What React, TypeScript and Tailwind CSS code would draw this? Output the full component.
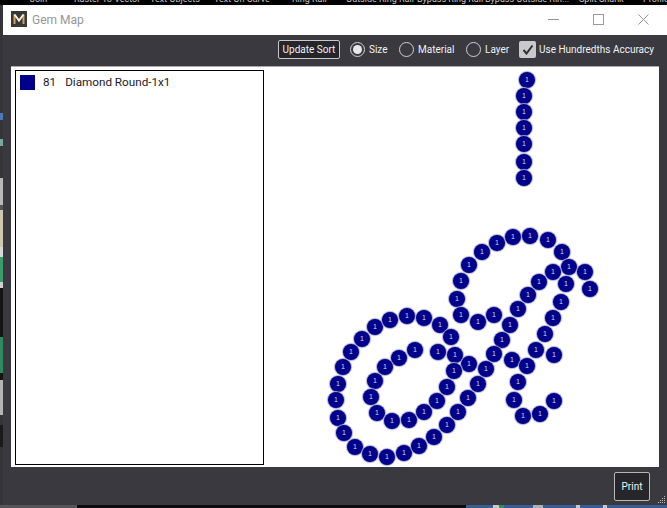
const FONT = "font-['Roboto','Liberation_Sans',sans-serif]"

// gem centres, read off the reference
const GEMS: [number, number][] = [
  [527, 79], [524, 95], [524, 111], [524, 127], [524, 143], [524, 161], [524, 177],
  [482, 251], [469, 264], [461, 280], [457, 298], [461, 314], [478, 321],
  [362, 338], [375, 326], [390, 319], [407, 315], [424, 317], [440, 324], [451, 336],
  [497, 242], [513, 236], [530, 235], [548, 239], [562, 251], [569, 266], [585, 271], [590, 288],
  [553, 271], [539, 281], [566, 283], [528, 294], [561, 301], [518, 308], [553, 317],
  [494, 314], [510, 324], [545, 333], [502, 339], [536, 349], [554, 354], [494, 353],
  [351, 351], [343, 366], [338, 383], [336, 399], [338, 417], [344, 432], [355, 446],
  [370, 453], [387, 456], [404, 452], [419, 445], [434, 436], [447, 424], [458, 411],
  [468, 397], [478, 383], [486, 368], [469, 363], [455, 354], [438, 351],
  [415, 349], [399, 357], [385, 366], [375, 380], [371, 396], [377, 412], [392, 420],
  [409, 419], [424, 411], [437, 400], [447, 386], [454, 370],
  [512, 359], [527, 365], [518, 381], [514, 399], [523, 415], [540, 413], [554, 400],
]

const PANEL_X = 11
const PANEL_Y = 66

function Radio({ label, checked, className }: { label: string; checked?: boolean; className: string }) {
  return (
    <div className={`flex items-center gap-[4px] ${className}`}>
      <span className="flex h-[15px] w-[15px] items-center justify-center rounded-full border border-[#d0d0d4]">
        {checked && <span className="h-[9px] w-[9px] rounded-full bg-[#e8e8ea]" />}
      </span>
      <span className="pt-[1px]">{label}</span>
    </div>
  )
}

export default function App() {
  return (
    <div className={`flex h-[508px] w-[667px] flex-col overflow-hidden bg-black ${FONT}`}>
      {/* app ribbon behind the dialog, only the bottom of the labels shows */}
      <div className="flex h-[5px] items-end overflow-hidden whitespace-nowrap pl-[30px] text-[9px] leading-[11px] text-[#c8c8c8]">
        <span className="w-[44px] shrink-0">Join</span>
        <span className="w-[76px] shrink-0">Raster To Vector</span>
        <span className="w-[64px] shrink-0">Text Objects</span>
        <span className="w-[78px] shrink-0">Text On Curve</span>
        <span className="w-[54px] shrink-0">Ring Rail</span>
        <span className="w-[71px] shrink-0">Outside Ring Rail</span>
        <span className="w-[68px] shrink-0">Bypass Ring Rail</span>
        <span className="w-[94px] shrink-0">Bypass Outside Rin...</span>
        <span className="w-[64px] shrink-0">Split Shank</span>
        <span className="shrink-0">Profile</span>
      </div>

      <div className="flex min-h-0 flex-1">
        {/* desktop sliver left of the dialog */}
        <div className="flex w-[3px] flex-col bg-[#34343a]">
          <div className="h-[108px]" />
          <div className="h-[7px] bg-[#4a78b8]" />
          <div className="h-[19px]" />
          <div className="h-[7px] bg-[#7aa89c]" />
          <div className="h-[32px]" />
          <div className="h-[27px] bg-[#b8b8b8]" />
          <div className="h-[5px] bg-[#55555a]" />
          <div className="h-[37px] bg-[#cfc8b0]" />
          <div className="h-[10px] bg-[#d8d8d8]" />
          <div className="h-[25px] bg-[#3c9a6c]" />
          <div className="h-[6px] bg-[#d0d0d0]" />
          <div className="h-[49px] bg-[#141414]" />
          <div className="h-[36px] bg-[#2f8a60]" />
          <div className="h-[7px] bg-[#141414]" />
          <div className="h-[35px] bg-[#b4b4b4]" />
          <div className="h-[10px]" />
          <div className="h-[22px] bg-[#1a1a1a]" />
        </div>

        <div className="flex min-w-0 flex-1 flex-col bg-[#3a393f]">
          <div className="flex h-[30px] items-center bg-white pb-[2px] pl-[8px] pr-[18px]">
            <svg width="16" height="16" viewBox="0 0 16 16">
              <rect width="16" height="16" fill="#3a3835" />
              <path d="M3.5 13V3.5M12.5 13V3.5" stroke="#c9a45c" strokeWidth="2" fill="none" />
              <path d="M3.5 3.5L8 9.5L12.5 3.5" stroke="#f2efe6" strokeWidth="2" fill="none" />
            </svg>
            <span className="ml-[5px] pt-[1px] text-[12px] leading-[16px] text-[#969696]">Gem Map</span>
            <div className="ml-auto flex items-center gap-[34px]">
              <svg width="11" height="11" viewBox="0 0 11 11" className="text-[#9a9a9a]">
                <path d="M0 5.5H11" stroke="currentColor" fill="none" />
              </svg>
              <svg width="11" height="11" viewBox="0 0 11 11" className="text-[#9a9a9a]">
                <rect x="0.5" y="0.5" width="10" height="10" stroke="currentColor" fill="none" />
              </svg>
              <svg width="11" height="11" viewBox="0 0 11 11" className="text-[#9a9a9a]">
                <path d="M0.5 0.5L10.5 10.5M10.5 0.5L0.5 10.5" stroke="currentColor" fill="none" />
              </svg>
            </div>
          </div>

          <div className="flex h-[31px] items-center pb-[3px] pl-[275px] text-[10px] leading-[16px] text-[#eef2f6]">
            <button className="mr-[10px] h-[19px] w-[62px] rounded-[2px] border border-[#c8c8c8] bg-[#25252a] pt-[1px] text-[10px] leading-none">
              Update Sort
            </button>
            <Radio label="Size" checked className="w-[49px]" />
            <Radio label="Material" className="w-[67px]" />
            <Radio label="Layer" className="w-[53px]" />
            <div className="flex items-center gap-[3px]">
              <span className="flex h-[17px] w-[17px] items-center justify-center rounded-[2px] bg-[#c9c9cb]">
                <svg width="12" height="11" viewBox="0 0 12 11">
                  <path d="M1.5 6L4.5 9.5L10.5 1.5" stroke="#2f2f33" strokeWidth="2" fill="none" />
                </svg>
              </span>
              <span className="pt-[1px]">Use Hundredths Accuracy</span>
            </div>
          </div>

          {/* white sheet: list on the left, free gem canvas behind */}
          <div className="relative mx-[8px] h-[401px] border-t border-[#aaaaaa] bg-white">
            <div className="absolute bottom-[2px] left-[4px] top-[3px] w-[249px] border border-black bg-white">
              <div className="flex items-center pl-[4px] pt-[3px] text-[11.7px] leading-[16px] text-[#1a1a2a]">
                <span className="h-[15px] w-[15px] bg-[#00008b]" />
                <span className="ml-[8px]">81</span>
                <span className="ml-[9px]">Diamond Round-1x1</span>
              </div>
            </div>
            {GEMS.map(([x, y], i) => (
              <div
                key={i}
                className="absolute flex h-[16px] w-[16px] items-center justify-center rounded-full bg-[#00008b] text-[7px] leading-none text-[#d8d8e8] shadow-[0_0_1px_1px_#a8a8cc] font-['Liberation_Sans',sans-serif]"
                style={{ left: x - PANEL_X - 8, top: y - PANEL_Y - 8.5 }}
              >
                1
              </div>
            ))}
          </div>

          <div className="relative flex flex-1 items-start justify-end pr-[17px] pt-[5px]">
            <button className="h-[29px] w-[36px] rounded-[2px] border border-[#b8b8b8] bg-[#27272b] text-[10px] text-[#eef2f6]">
              Print
            </button>
            {/* resize grip */}
            <svg width="8" height="8" viewBox="0 0 8 8" className="absolute bottom-[1px] right-[1px] text-[#bdbdbd]">
              <path d="M6 0h1v1H6zM4 2h1v1H4zM6 2h1v1H6zM2 4h1v1H2zM4 4h1v1H4zM6 4h1v1H6zM0 6h1v1H0zM2 6h1v1H2zM4 6h1v1H4zM6 6h1v1H6z" fill="currentColor" />
            </svg>
          </div>
        </div>
      </div>

      {/* desktop sliver under the dialog */}
      <div className="flex h-[3px] bg-[#0c0c0e]">
        <div className="w-[77px] bg-[#55555a]" />
        <div className="ml-[389px] w-[27px] bg-[#3a5c96]" />
        <div className="w-[6px] bg-[#c8c8c8]" />
        <div className="w-[5px] bg-[#2f8f4a]" />
        <div className="w-[29px] bg-[#3a5c96]" />
        <div className="w-[10px] bg-[#b0b0b0]" />
        <div className="w-[33px] bg-[#3a5c96]" />
        <div className="w-[4px] bg-[#c8c8c8]" />
        <div className="w-[23px] bg-[#3a5c96]" />
        <div className="w-[4px] bg-[#c8c8c8]" />
        <div className="flex-1 bg-[#3a5c96]" />
      </div>
    </div>
  )
}
